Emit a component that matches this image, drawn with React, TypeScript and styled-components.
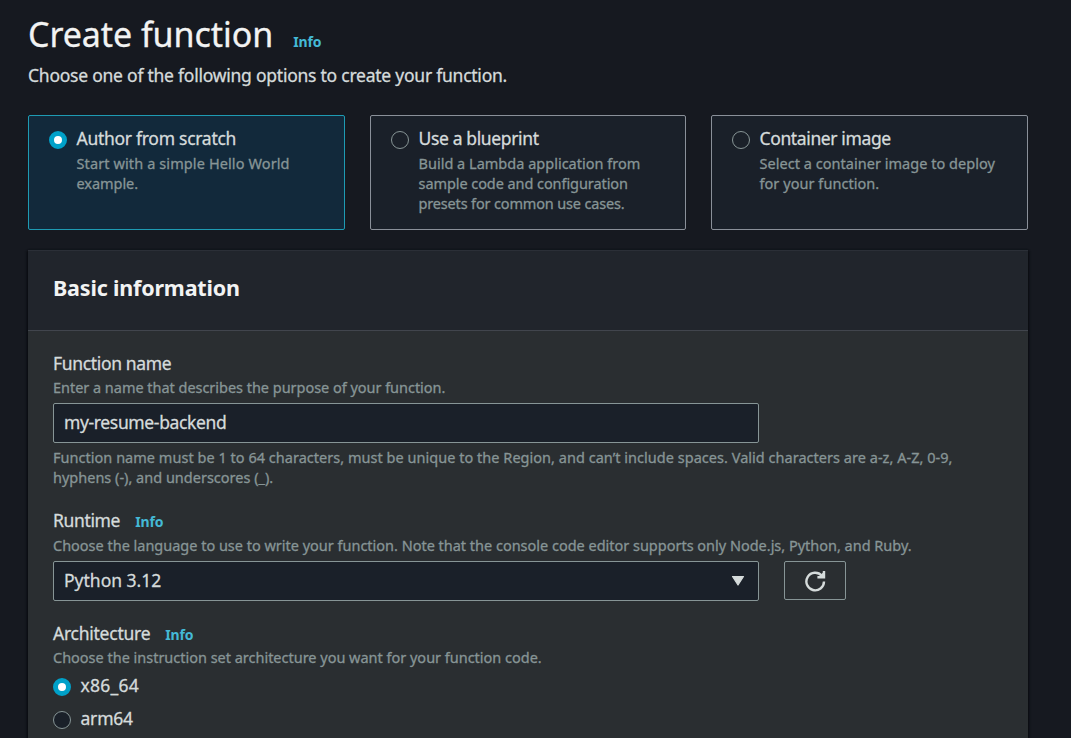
import React from "react";
import styled, { createGlobalStyle } from "styled-components";

const GlobalStyle = createGlobalStyle`
  * { box-sizing: border-box; }
  html, body { margin: 0; height: 738px; overflow: hidden; background: #161920; }
  body { font-family: "Noto Sans", sans-serif; color: #d5dbdb; -webkit-text-stroke: 0.3px; }
  h1, h2, p { margin: 0; font-weight: 400; }
`;

type TextProps = { $track?: number };

const Page = styled.main`
  width: 1071px;
  height: 738px;
  overflow: hidden;
  padding: 11px 43px 0 28px;
`;

const TitleRow = styled.header`
  display: flex;
  align-items: baseline;
  gap: 20px;
  height: 48px;
`;

const Title = styled.h1<TextProps>`
  font-size: 34px;
  line-height: 46px;
  color: #f2f3f3;
  white-space: nowrap;
  letter-spacing: ${(p) => p.$track ?? 0}px;
`;

const InfoLink = styled.a`
  font-size: 14px;
  line-height: 20px;
  font-weight: 700;
  color: #44b9d6;
  letter-spacing: -0.15px;
  -webkit-text-stroke: 0;
`;

const Subtitle = styled.p<TextProps>`
  font-size: 17.5px;
  line-height: 28px;
  margin-top: 2px;
  white-space: nowrap;
  letter-spacing: ${(p) => p.$track ?? 0}px;
`;

const Tiles = styled.div`
  display: grid;
  grid-template-columns: 317px 316px 317px;
  column-gap: 25px;
  height: 115px;
  margin-top: 26px;
`;

const Tile = styled.label<{ $selected?: boolean }>`
  display: flex;
  align-items: flex-start;
  gap: 10px;
  padding: 10px 0 0 19.5px;
  border: 1px solid ${(p) => (p.$selected ? "#1e9bb3" : "#8a9099")};
  border-radius: 2px;
  background: ${(p) => (p.$selected ? "#12293b" : "#1a2029")};
`;

const Radio = styled.span<{ $checked?: boolean }>`
  flex: none;
  width: 18px;
  height: 18px;
  margin-top: 5px;
  border-radius: 50%;
  border: ${(p) => (p.$checked ? "5.5px solid #00a1c9" : "1px solid #879596")};
  background: ${(p) => (p.$checked ? "#ffffff" : "#1a2029")};
`;

const Label = styled.div<TextProps>`
  font-size: 17.5px;
  line-height: 25px;
  white-space: nowrap;
  letter-spacing: ${(p) => p.$track ?? 0}px;
`;

const TileLabel = styled(Label)`
  margin-bottom: 2px;
`;

const Hint = styled.div<TextProps>`
  font-size: 14.5px;
  line-height: 20px;
  color: #879596;
  white-space: nowrap;
  letter-spacing: ${(p) => p.$track ?? 0}px;
`;

const Panel = styled.section`
  width: 1000px;
  height: 500px;
  margin-top: 20px;
  background: #2a2e31;
  box-shadow: 0 1px 2px #0a0c10, 1px 1px 2px #0d0f13, -1px 1px 2px #0d0f13;
`;

const PanelHeader = styled.div`
  height: 81px;
  padding: 22px 25px 0;
  background: #21252c;
  border-top: 1px solid #2b2f37;
  border-bottom: 1px solid #41454d;
`;

const PanelTitle = styled.h2<TextProps>`
  font-size: 21.5px;
  line-height: 30px;
  font-weight: 700;
  color: #f2f3f3;
  white-space: nowrap;
  letter-spacing: ${(p) => p.$track ?? 0}px;
  -webkit-text-stroke: 0;
`;

const Form = styled.div`
  padding: 20px 25px 0;
`;

const Field = styled.div<{ $height: number }>`
  height: ${(p) => p.$height}px;
`;

const LabelRow = styled.div<{ $height: number }>`
  display: flex;
  align-items: baseline;
  gap: 15px;
  height: ${(p) => p.$height}px;
`;

const Control = styled.div`
  display: flex;
  align-items: center;
  justify-content: space-between;
  width: 706px;
  height: 40px;
  padding: 0 13px 2px 10px;
  border: 1px solid #879596;
  border-radius: 2px;
  background: #1a2029;
`;

const InputBox = styled(Control)`
  margin: 6px 0 4px;
`;

const ControlRow = styled.div`
  display: flex;
  gap: 25px;
  margin-top: 6px;
`;

const RefreshButton = styled.button`
  display: flex;
  align-items: center;
  justify-content: center;
  width: 62px;
  height: 39px;
  padding: 0;
  border: 1px solid #879596;
  border-radius: 2px;
  background: transparent;
`;

const Options = styled.div`
  margin-top: 6px;
`;

const Option = styled.label`
  display: flex;
  gap: 9.5px;
  height: 33px;
`;

const Caret = () => (
  <svg width="14" height="12" viewBox="0 0 14 12">
    <path d="M1.5 2.5h11L7 11z" fill="#d5dbdb" stroke="#d5dbdb" strokeWidth="1.2" strokeLinejoin="round" />
  </svg>
);

const RefreshIcon = () => (
  <svg width="22" height="22" viewBox="0 0 22 22" fill="none" stroke="#d5dbdb" strokeWidth="2.4">
    <path d="M20 11.4A8.8 8.8 0 1 1 17.8 5.7" />
    <path d="M20 1v6.3H13.4" />
    <path d="M14.8 6.8L19.5 2.1v4.7z" fill="#d5dbdb" stroke="none" />
  </svg>
);

const tiles = [
  {
    title: "Author from scratch",
    track: -0.28,
    selected: true,
    lines: [
      { text: "Start with a simple Hello World", track: 0.11 },
      { text: "example.", track: -0.05 },
    ],
  },
  {
    title: "Use a blueprint",
    track: -0.36,
    lines: [
      { text: "Build a Lambda application from", track: 0.01 },
      { text: "sample code and configuration", track: -0.07 },
      { text: "presets for common use cases.", track: -0.16 },
    ],
  },
  {
    title: "Container image",
    track: -0.37,
    lines: [
      { text: "Select a container image to deploy", track: 0.03 },
      { text: "for your function.", track: 0.05 },
    ],
  },
];

export default function App() {
  return (
    <Page>
      <GlobalStyle />
      <TitleRow>
        <Title $track={-0.06}>Create function</Title>
        <InfoLink>Info</InfoLink>
      </TitleRow>
      <Subtitle $track={-0.24}>Choose one of the following options to create your function.</Subtitle>
      <Tiles>
        {tiles.map((tile) => (
          <Tile key={tile.title} $selected={tile.selected}>
            <Radio $checked={tile.selected} />
            <div>
              <TileLabel $track={tile.track}>{tile.title}</TileLabel>
              {tile.lines.map((line) => (
                <Hint key={line.text} $track={line.track}>
                  {line.text}
                </Hint>
              ))}
            </div>
          </Tile>
        ))}
      </Tiles>
      <Panel>
        <PanelHeader>
          <PanelTitle $track={-0.18}>Basic information</PanelTitle>
        </PanelHeader>
        <Form>
          <Field $height={157}>
            <LabelRow $height={26}>
              <Label $track={-0.34}>Function name</Label>
            </LabelRow>
            <Hint $track={-0.03}>Enter a name that describes the purpose of your function.</Hint>
            <InputBox>
              <Label $track={-0.36}>my-resume-backend</Label>
            </InputBox>
            <Hint $track={0.027}>Function name must be 1 to 64 characters, must be unique to the Region, and can’t include spaces. Valid characters are a-z, A-Z, 0-9,</Hint>
            <Hint>hyphens (-), and underscores (_).</Hint>
          </Field>
          <Field $height={113}>
            <LabelRow $height={27}>
              <Label $track={-0.35}>Runtime</Label>
              <InfoLink>Info</InfoLink>
            </LabelRow>
            <Hint $track={-0.012}>Choose the language to use to write your function. Note that the console code editor supports only Node.js, Python, and Ruby.</Hint>
            <ControlRow>
              <Control>
                <Label>Python 3.12</Label>
                <Caret />
              </Control>
              <RefreshButton aria-label="Refresh">
                <RefreshIcon />
              </RefreshButton>
            </ControlRow>
          </Field>
          <Field $height={120}>
            <LabelRow $height={26}>
              <Label $track={-0.25}>Architecture</Label>
              <InfoLink>Info</InfoLink>
            </LabelRow>
            <Hint $track={-0.014}>Choose the instruction set architecture you want for your function code.</Hint>
            <Options>
              <Option>
                <Radio $checked />
                <Label $track={0.25}>x86_64</Label>
              </Option>
              <Option>
                <Radio />
                <Label $track={-0.2}>arm64</Label>
              </Option>
            </Options>
          </Field>
        </Form>
      </Panel>
    </Page>
  );
}
